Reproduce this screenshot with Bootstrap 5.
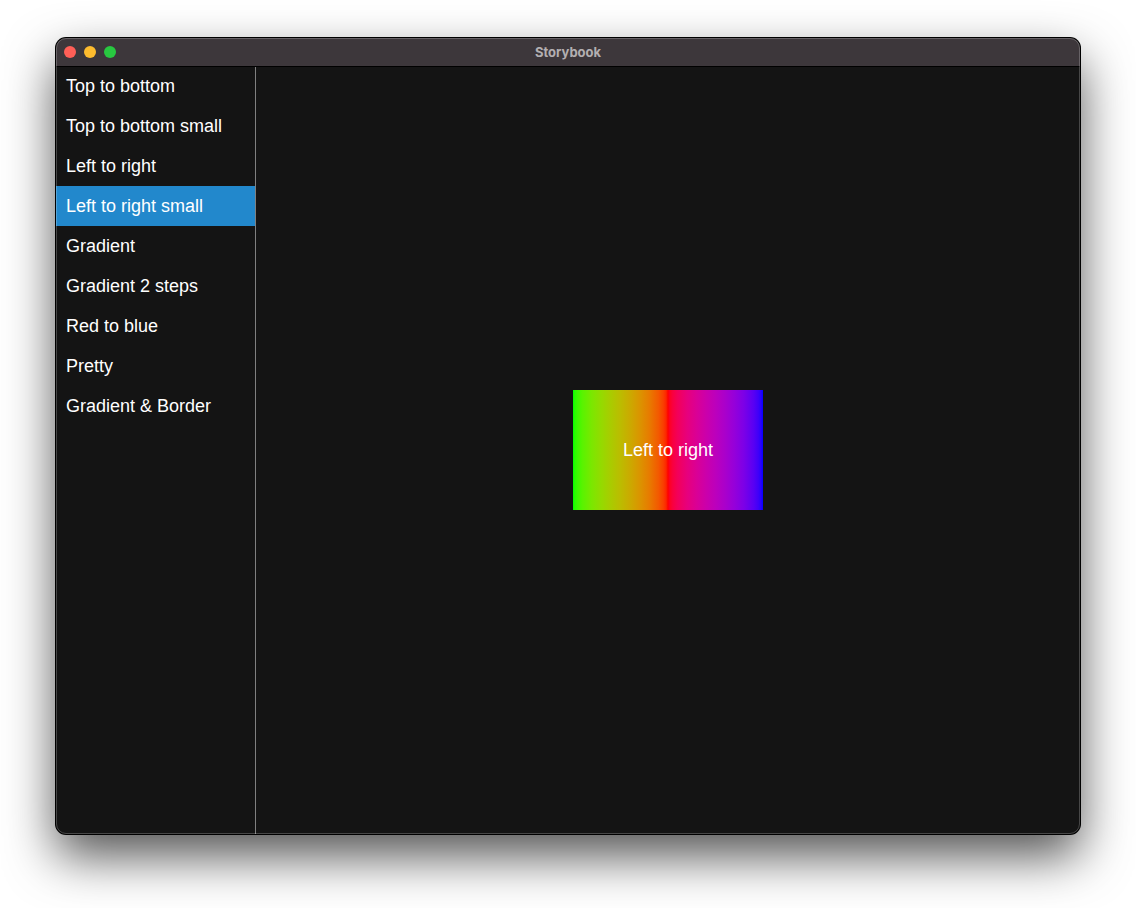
<!DOCTYPE html>
<html lang="en" data-bs-theme="dark">
<head>
<meta charset="utf-8">
<meta name="viewport" content="width=device-width, initial-scale=1">
<title>Storybook</title>
<link href="https://cdn.jsdelivr.net/npm/bootstrap@5.3.0/dist/css/bootstrap.min.css" rel="stylesheet">
<style>
  body { background: #fff; padding: 38px 56px 74px; font-family: "Liberation Sans", Arial, sans-serif; font-size: 18px; line-height: 20px; }
  .app-window { position: relative; background: #141414; border-radius: 10px; box-shadow: 0 0 0 1px #000, 0 22px 50px rgba(0, 0, 0, .68); }
  /* thin light rim along the window edge */
  .app-window::after { content: ""; position: absolute; inset: 0; z-index: 2; border-radius: inherit; border: 1px solid rgba(255, 255, 255, .22); pointer-events: none; }
  .title-bar { height: 28px; padding: 0 8px; background: #3d373b; border-radius: 10px 10px 0 0; box-shadow: 0 1px 0 #000; z-index: 1; }
  .title-bar h1 { font-family: "Inter", "Liberation Sans", sans-serif; font-weight: 700; font-size: 13px; line-height: 14px; color: #b3afb1; }
  .window-controls { flex: 1 0 0; gap: 8px; }
  .window-controls button { width: 12px; height: 12px; }
  .ctl-close { background: #ff5f57; }
  .ctl-min { background: #febc2e; }
  .ctl-max { background: #28c840; }
  .story-list { width: 200px; border-right: 1px solid #808080; }
  .story-list a { padding: 10px; color: #fff; }
  .story-list a.active { background: #2288cc; }
  .gradient-box { padding: 50px; color: #fff;
    background: linear-gradient(to right,
      #00ff00 0%, #27fd00 1%, #3ff900 2.5%, #59f300 5%, #7ce700 10%, #95da00 15%, #aacb00 20%, #bcbc00 25%,
      #cbaa00 30%, #da9500 35%, #e77c00 40%, #f35900 45%, #f93f00 47.5%, #fd2700 49%, #ff0000 50%,
      #fd0027 51%, #f9003f 52.5%, #f30059 55%, #e7007c 60%, #da0095 65%, #cb00aa 70%, #bc00bc 75%,
      #aa00cb 80%, #9500da 85%, #7c00e7 90%, #5900f3 95%, #3f00f9 97.5%, #2700fd 99%, #0000ff 100%); }
</style>
</head>
<body class="min-vh-100 d-flex">
<div class="app-window flex-grow-1 d-flex flex-column">
  <header class="title-bar position-relative d-flex align-items-center">
    <div class="window-controls d-flex">
      <button type="button" class="ctl-close border-0 p-0 rounded-circle" aria-label="Close"></button>
      <button type="button" class="ctl-min border-0 p-0 rounded-circle" aria-label="Minimize"></button>
      <button type="button" class="ctl-max border-0 p-0 rounded-circle" aria-label="Zoom"></button>
    </div>
    <h1 class="m-0">Storybook</h1>
    <div class="window-controls"></div>
  </header>
  <div class="flex-grow-1 d-flex">
    <nav class="story-list nav flex-column flex-nowrap flex-shrink-0" aria-label="Stories">
      <a class="text-decoration-none" href="#">Top to bottom</a>
      <a class="text-decoration-none" href="#">Top to bottom small</a>
      <a class="text-decoration-none" href="#">Left to right</a>
      <a class="text-decoration-none active" href="#" aria-current="page">Left to right small</a>
      <a class="text-decoration-none" href="#">Gradient</a>
      <a class="text-decoration-none" href="#">Gradient 2 steps</a>
      <a class="text-decoration-none" href="#">Red to blue</a>
      <a class="text-decoration-none" href="#">Pretty</a>
      <a class="text-decoration-none" href="#">Gradient &amp; Border</a>
    </nav>
    <main class="flex-grow-1 d-flex align-items-center justify-content-center">
      <div class="gradient-box">Left to right</div>
    </main>
  </div>
</div>
<script src="https://cdn.jsdelivr.net/npm/bootstrap@5.3.0/dist/js/bootstrap.bundle.min.js"></script>
</body>
</html>
